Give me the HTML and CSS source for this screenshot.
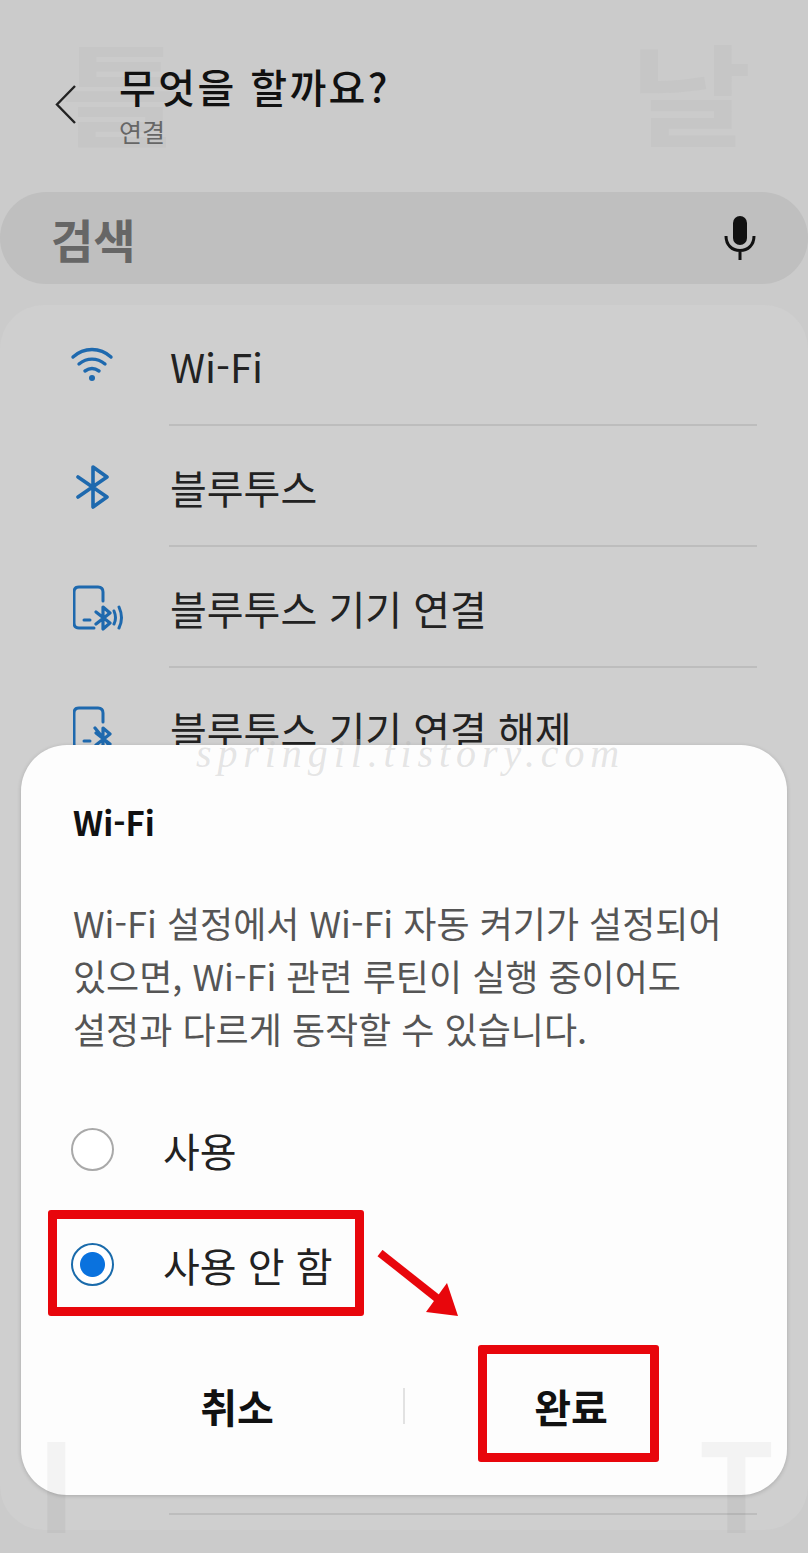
FILE: index.html
```html
<!DOCTYPE html>
<html lang="ko">
<head>
    <meta charset="UTF-8">
    <meta name="viewport" content="width=device-width, initial-scale=1.0">
    <title>무엇을 할까요?</title>
    <link rel="stylesheet" href="styles.css">
</head>
<body>
<div class="screen">

    <!-- faint stamped letters behind the header -->
    <span class="ghost ghost-a">틀</span>
    <span class="ghost ghost-b">날</span>

    <header class="top-bar">
        <svg class="back-icon" width="24" height="40" viewBox="0 0 24 40">
            <path d="M21 2 3 20.500 21 39" fill="none" stroke="#222" stroke-width="2.400"/>
        </svg>
        <div class="top-titles">
            <h1 class="page-title">무엇을 할까요?</h1>
            <div class="page-sub">연결</div>
        </div>
    </header>

    <div class="search-bar">
        <span class="search-label">검색</span>
        <svg class="mic-icon" width="32" height="44" viewBox="0 0 32 44">
            <rect x="9" y="0" width="14" height="29" rx="7" fill="#111"/>
            <path d="M2 20c0 9 6 14.500 14 14.500S30 29 30 20M16 34v10" fill="none" stroke="#111" stroke-width="3"/>
        </svg>
    </div>

    <section class="list-card">
        <div class="list-row">
            <svg class="row-icon" width="52" height="44" viewBox="0 0 52 44">
                <g fill="none" stroke="#1e69ae" stroke-width="3.400" stroke-linecap="round">
                    <path d="M7 13C18 3 34 3 45 13"/>
                    <path d="M13 20c8-6.500 18-6.500 26 0"/>
                    <path d="M19 27c5-3.500 9-3.500 14 0"/>
                </g>
                <circle cx="26" cy="34" r="3" fill="#1e69ae"/>
            </svg>
            <span class="row-text">Wi-Fi</span>
        </div>
        <div class="list-row">
            <svg class="row-icon" width="52" height="44" viewBox="0 0 52 44">
                <path d="M12 12 41 32 27 42V2l14 10L12 32" fill="none" stroke="#1e69ae" stroke-width="3.600" stroke-linejoin="round" stroke-linecap="round"/>
            </svg>
            <span class="row-text">블루투스</span>
        </div>
        <div class="list-row">
            <svg class="row-icon row-icon-phone" width="52" height="46" viewBox="0 0 52 46">
                <g fill="none" stroke="#1e69ae" stroke-width="3" stroke-linecap="round" stroke-linejoin="round">
                    <path d="M30 16V7q0-5-5-5H6Q1 2 1 7v31q0 5 5 5h15"/>
                    <path d="M11 35h6"/>
                    <path d="M23 27 37 38 30 44V22l7 6L23 39" stroke-width="3.200"/>
                    <path d="M41 26q3 7 0 13M46 22q5 11 0 21"/>
                </g>
            </svg>
            <span class="row-text">블루투스 기기 연결</span>
        </div>
        <div class="list-row">
            <svg class="row-icon row-icon-phone" width="52" height="46" viewBox="0 0 52 46">
                <g fill="none" stroke="#1e69ae" stroke-width="3" stroke-linecap="round" stroke-linejoin="round">
                    <path d="M30 16V7q0-5-5-5H6Q1 2 1 7v31q0 5 5 5h15"/>
                    <path d="M11 35h6"/>
                    <path d="M23 27 37 38 30 44V22l7 6L23 39M22 22l18 22" stroke-width="3.200"/>
                </g>
            </svg>
            <span class="row-text">블루투스 기기 연결 해제</span>
        </div>
        <div class="list-row"></div>
        <div class="list-row"></div>
        <div class="list-row"></div>
        <div class="list-row"></div>
        <div class="list-row"></div>
        <div class="list-row"></div>
    </section>

    <!-- dialog sits over the list -->
    <div class="dialog">
        <h2 class="dialog-title">Wi-Fi</h2>
        <p class="dialog-text">Wi-Fi 설정에서 Wi-Fi 자동 켜기가 설정되어<br>있으면, Wi-Fi 관련 루틴이 실행 중이어도<br>설정과 다르게 동작할 수 있습니다.</p>
        <div class="radio-row">
            <span class="radio"></span>
            <span class="radio-text">사용</span>
        </div>
        <div class="radio-row">
            <span class="radio radio-on"></span>
            <span class="radio-text">사용 안 함</span>
        </div>
        <div class="dialog-buttons">
            <button class="dialog-btn">취소</button>
            <span class="btn-divider"></span>
            <button class="dialog-btn">완료</button>
        </div>
    </div>

    <!-- these two show through the dialog -->
    <span class="ghost ghost-c">I</span>
    <span class="ghost ghost-d">T</span>

    <!-- red annotations on top of the screenshot -->
    <div class="mark mark-radio"></div>
    <div class="mark mark-done"></div>
    <svg class="mark-arrow" width="90" height="74" viewBox="0 0 90 74">
        <path d="M4 3 62 49" fill="none" stroke="#e8060c" stroke-width="8"/>
        <path d="M82 66 50 62 71 33Z" fill="#e8060c"/>
    </svg>

    <div class="watermark">springil.tistory.com</div>
</div>
</body>
</html>
```

FILE: styles.css
```css
body {
    margin: 0;
    background-color: #cbcbcb;
    font-family: "Noto Sans CJK KR", "Noto Sans", sans-serif;
}

.screen {
    position: relative;
    width: 808px;
    height: 1553px;
    overflow: hidden;
    background-color: #cbcbcb;
}

.ghost {
    position: absolute;
    font-weight: 700;
    color: #c6c6c6;
    line-height: 1;
    font-size: 116px;
    transform: scale(1.14, 0.95);
    transform-origin: left top;
}

.ghost-a { left: 60px; top: 34px; }
.ghost-b { left: 630px; top: 34px; }

.ghost-c,
.ghost-d {
    top: 1418px;
    font-size: 123px;
    color: rgba(0, 0, 0, 0.04);
    transform: none;
}

.ghost-c { left: 36px; }
.ghost-d { left: 698px; }

.top-bar {
    position: relative;
    display: flex;
    align-items: flex-start;
    height: 192px;
    box-sizing: border-box;
    padding: 59px 0 0 54px;
}

.back-icon {
    margin-top: 25px;
    margin-right: 41px;
}

.page-title {
    margin: 0;
    font-size: 40px;
    font-weight: 500;
    letter-spacing: 2.400px;
    line-height: 54px;
    color: #111;
}

.page-sub {
    font-size: 25px;
    line-height: 32px;
    margin-top: 2px;
    color: #666;
}

.search-bar {
    position: relative;
    display: flex;
    align-items: center;
    justify-content: space-between;
    height: 92px;
    padding: 0 51px;
    border-radius: 46px;
    background-color: #bfbfbf;
}

.search-label {
    font-size: 46px;
    font-weight: 700;
    color: #666;
}

.mic-icon {
    margin-right: 1px;
}

.list-card {
    position: relative;
    margin-top: 21px;
    height: 1225px;
    border-radius: 44px;
    background-color: #cfcfcf;
}

.list-row {
    display: flex;
    align-items: center;
    height: 121px;
    padding: 0 51px 0 66px;
    position: relative;
}

.list-row::after {
    content: "";
    position: absolute;
    left: 169px;
    right: 51px;
    bottom: 0;
    height: 2px;
    background-color: #bdbdbd;
}

.row-icon {
    flex: none;
    margin-right: 52px;
}

.row-icon-phone {
    margin-left: 7px;
    margin-right: 45px;
}

.row-text {
    font-size: 40px;
    color: #222;
}

.dialog {
    position: absolute;
    left: 21px;
    top: 745px;
    width: 766px;
    height: 750px;
    box-sizing: border-box;
    padding: 52px 0 0 52px;
    border-radius: 46px;
    background-color: #fdfdfd;
    box-shadow: 0 1px 4px rgba(0, 0, 0, 0.18);
}

.dialog-title {
    margin: 0;
    font-size: 33px;
    font-weight: 700;
    line-height: 50px;
    color: #111;
}

.dialog-text {
    margin: 49px 0 0;
    font-size: 36px;
    line-height: 53px;
    color: #555;
}

.radio-row {
    display: flex;
    align-items: center;
    height: 115px;
}

.dialog-text + .radio-row {
    margin-top: 37px;
}

.radio {
    flex: none;
    width: 39px;
    height: 39px;
    margin-left: -2px;
    margin-right: 49px;
    border: 2px solid #a9a9a9;
    border-radius: 50%;
    background-color: #fff;
}

.radio-on {
    border-color: #1a6bab;
    background: radial-gradient(circle, #0a72de 0 12px, #fff 13px);
}

.radio-text {
    font-size: 40px;
    color: #222;
}

.dialog-buttons {
    position: absolute;
    left: 50px;
    right: 50px;
    top: 622px;
    display: flex;
    align-items: center;
    height: 78px;
}

.dialog-btn {
    flex: 1;
    border: none;
    background: none;
    padding: 0;
    font-family: inherit;
    font-size: 40px;
    font-weight: 700;
    color: #111;
}

.btn-divider {
    flex: none;
    width: 2px;
    height: 36px;
    background-color: #e2e2e2;
}

.mark {
    position: absolute;
    box-sizing: border-box;
    border: 9px solid #e8060c;
    border-radius: 3px;
}

.mark-radio {
    left: 48px;
    top: 1210px;
    width: 316px;
    height: 106px;
}

.mark-done {
    left: 478px;
    top: 1345px;
    width: 181px;
    height: 117px;
}

.mark-arrow {
    position: absolute;
    left: 376px;
    top: 1250px;
}

.watermark {
    position: absolute;
    left: 196px;
    top: 730px;
    font-family: "Liberation Serif", serif;
    font-style: italic;
    font-size: 40px;
    letter-spacing: 5.900px;
    color: rgba(170, 170, 170, 0.3);
}
```
